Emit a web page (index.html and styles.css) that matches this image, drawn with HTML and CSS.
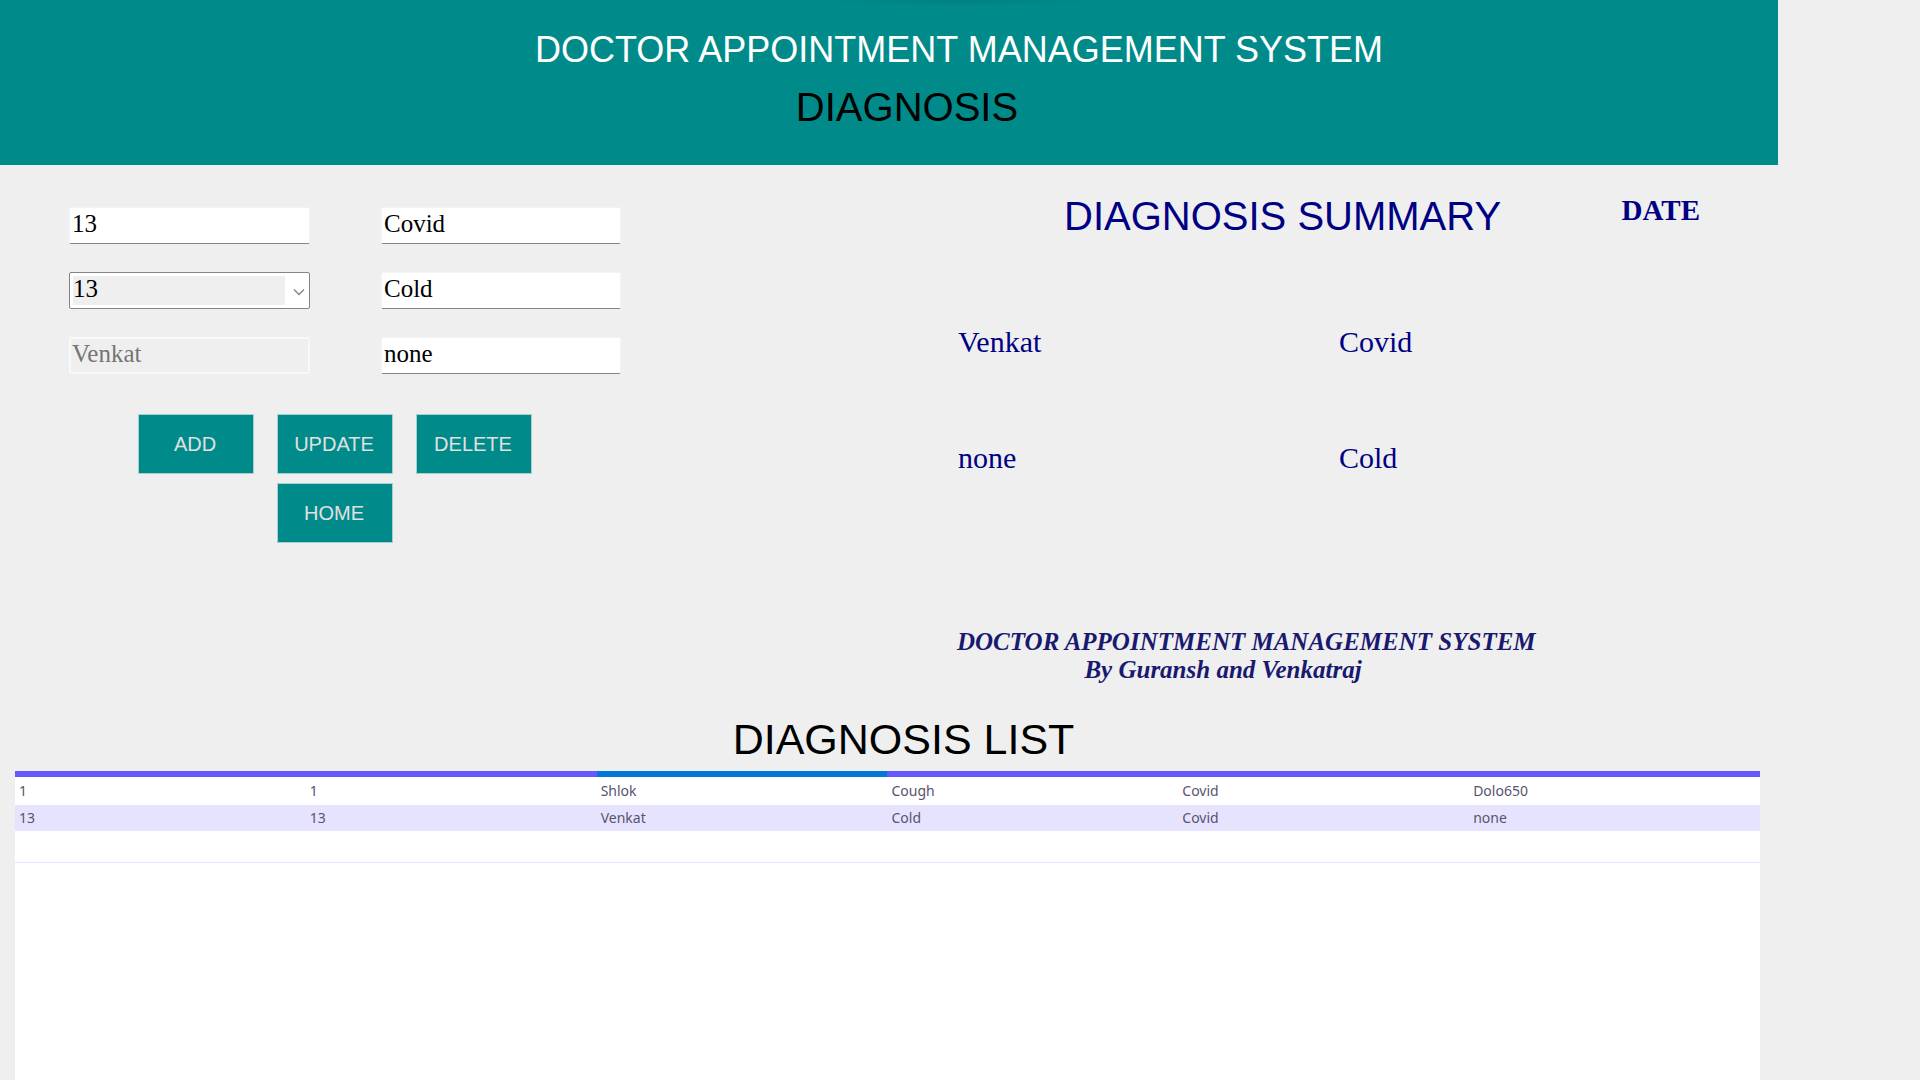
FILE: index.html
```html
<!DOCTYPE html>
<html lang="en">
<head>
<meta charset="utf-8">
<title>Doctor Appointment Management System</title>
<link rel="stylesheet" href="styles.css">
</head>
<body>
<header class="banner">
  <h1 class="banner-title">DOCTOR APPOINTMENT MANAGEMENT SYSTEM</h1>
  <p class="banner-page">DIAGNOSIS</p>
</header>
<main class="content">
  <div class="top">
    <form class="entry">
      <div class="fields">
        <input class="field" type="text" value="13" aria-label="Diagnosis id">
        <input class="field" type="text" value="Covid" aria-label="Diagnosis">
        <div class="combo">
          <select class="combo-select" aria-label="Patient id"><option>13</option></select>
          <svg class="combo-arrow" viewBox="0 0 12 8" aria-hidden="true"><path d="M1 1.5 6 6.5 11 1.5" fill="none" stroke="#858585" stroke-width="1.4"/></svg>
        </div>
        <input class="field" type="text" value="Cold" aria-label="Symptoms">
        <input class="field" type="text" value="Venkat" aria-label="Patient name" disabled>
        <input class="field" type="text" value="none" aria-label="Medicines">
      </div>
      <div class="actions">
        <button class="action" type="button">ADD</button>
        <button class="action" type="button">UPDATE</button>
        <button class="action" type="button">DELETE</button>
        <button class="action action-home" type="button">HOME</button>
      </div>
    </form>
    <section class="summary">
      <div class="summary-head">
        <h2 class="summary-title">DIAGNOSIS SUMMARY</h2>
        <span class="summary-date">DATE</span>
      </div>
      <div class="summary-values">
        <span>Venkat</span><span>Covid</span>
        <span>none</span><span>Cold</span>
      </div>
      <div class="credit">
        <p>DOCTOR APPOINTMENT MANAGEMENT SYSTEM</p>
        <p class="credit-by">By Guransh and Venkatraj</p>
      </div>
    </section>
  </div>
  <h2 class="list-title">DIAGNOSIS LIST</h2>
  <div class="list">
    <table class="grid">
      <thead>
        <tr><th></th><th></th><th class="current"></th><th></th><th></th><th></th></tr>
      </thead>
      <tbody>
        <tr><td>1</td><td>1</td><td>Shlok</td><td>Cough</td><td>Covid</td><td>Dolo650</td></tr>
        <tr class="selected"><td>13</td><td>13</td><td>Venkat</td><td>Cold</td><td>Covid</td><td>none</td></tr>
        <tr class="blank"><td colspan="6"></td></tr>
      </tbody>
    </table>
  </div>
</main>
</body>
</html>
```
FILE: styles.css
```css
* { box-sizing: border-box; }

body {
  margin: 0;
  padding-right: 142px;
  min-height: 100vh;
  display: flex;
  flex-direction: column;
  background: #efefef;
  color: #000;
  font-family: "Liberation Sans", Arial, sans-serif;
}

h1, h2, p { margin: 0; font-weight: 400; }

.banner {
  height: 165px;
  padding-top: 29px;
  background: radial-gradient(ellipse 150px 6px at 960px 0, #007f80, #008b8a) #008b8a;
  text-align: center;
}
.banner-title {
  padding-left: 140px;
  font-size: 36px;
  line-height: 42px;
  color: #fff;
}
.banner-page {
  margin-top: 13px;
  padding-left: 36px;
  font-size: 40px;
  line-height: 46px;
}

.content {
  flex: 1;
  display: flex;
  flex-direction: column;
  padding: 27px 18px 0 15px;
}

.top {
  display: grid;
  grid-template-columns: 942px 1fr;
}

.entry { padding: 15px 0 0 54px; }

.fields {
  display: grid;
  grid-template-columns: 241px 240px;
  column-gap: 71px;
  row-gap: 28px;
}
.field {
  width: 100%;
  height: 37px;
  padding: 0 2px 3px;
  border: 1px solid #f4f4f4;
  border-bottom-color: #858585;
  border-radius: 2px;
  background: #fff;
  color: #000;
  font: 25px/30px "Liberation Serif", "Times New Roman", serif;
}
.field:disabled {
  padding: 0 1px 3px;
  border: 2px solid #f8f8f8;
  background: #efefef;
  color: #747474;
}

.combo { position: relative; height: 37px; }
.combo-select {
  appearance: none;
  width: 100%;
  height: 37px;
  padding: 0 24px 3px 3px;
  border: 1px solid #858585;
  border-radius: 2px;
  background: linear-gradient(#efefef, #efefef) 3px 3px / calc(100% - 27px) calc(100% - 6px) no-repeat #fff;
  color: #000;
  font: 25px/30px "Liberation Serif", "Times New Roman", serif;
}
.combo-arrow {
  position: absolute;
  right: 5px;
  top: 16px;
  width: 12px;
  height: 8px;
  pointer-events: none;
}

.actions {
  display: grid;
  grid-template-columns: repeat(3, 116px);
  gap: 9px 23px;
  margin: 40px 0 0 69px;
}
.action {
  height: 60px;
  padding: 0 2px 0 0;
  border: 1px solid #a8cfcf;
  background: #008b8a;
  color: #e0e0e0;
  font: 20px/24px "Liberation Sans", Arial, sans-serif;
}
.action-home { grid-column: 2; }

.summary { color: #000084; }
.summary-head {
  display: flex;
  justify-content: space-between;
  padding: 0 60px 0 107px;
}
.summary-title { font-size: 40px; line-height: 48px; }
.summary-date {
  font: 700 29px/36px "Liberation Serif", "Times New Roman", serif;
}
.summary-values {
  display: grid;
  grid-template-columns: 381px 1fr;
  row-gap: 80px;
  margin-top: 84px;
  padding-left: 1px;
  font: 30px/36px "Liberation Serif", "Times New Roman", serif;
}
.credit {
  width: 572px;
  margin-top: 152px;
  color: #191970;
  font-family: "Liberation Serif", "Times New Roman", serif;
  font-size: 25px;
  line-height: 28px;
  text-align: center;
  white-space: nowrap;
}
.credit p { font-weight: 700; font-style: italic; }
.credit-by { padding-right: 40px; }

.list-title {
  margin-top: 30px;
  padding-left: 32px;
  font-size: 43px;
  line-height: 50px;
  text-align: center;
}
.list {
  flex: 1;
  margin-top: 7px;
  background: #fff;
}
.grid {
  width: 100%;
  table-layout: fixed;
  border-collapse: collapse;
  color: #57536e;
  font: 14px/20px "Noto Sans", "Open Sans", sans-serif;
}
.grid th { height: 6px; padding: 0; background: #6558ff; }
.grid th.current { background: #0078d7; }
.grid td { height: 28px; padding: 0 0 0 4px; }
.grid .selected td { height: 26px; background: #e6e3ff; }
.grid .blank td { height: 31px; border-bottom: 1px solid #e6e3ff; }
```
